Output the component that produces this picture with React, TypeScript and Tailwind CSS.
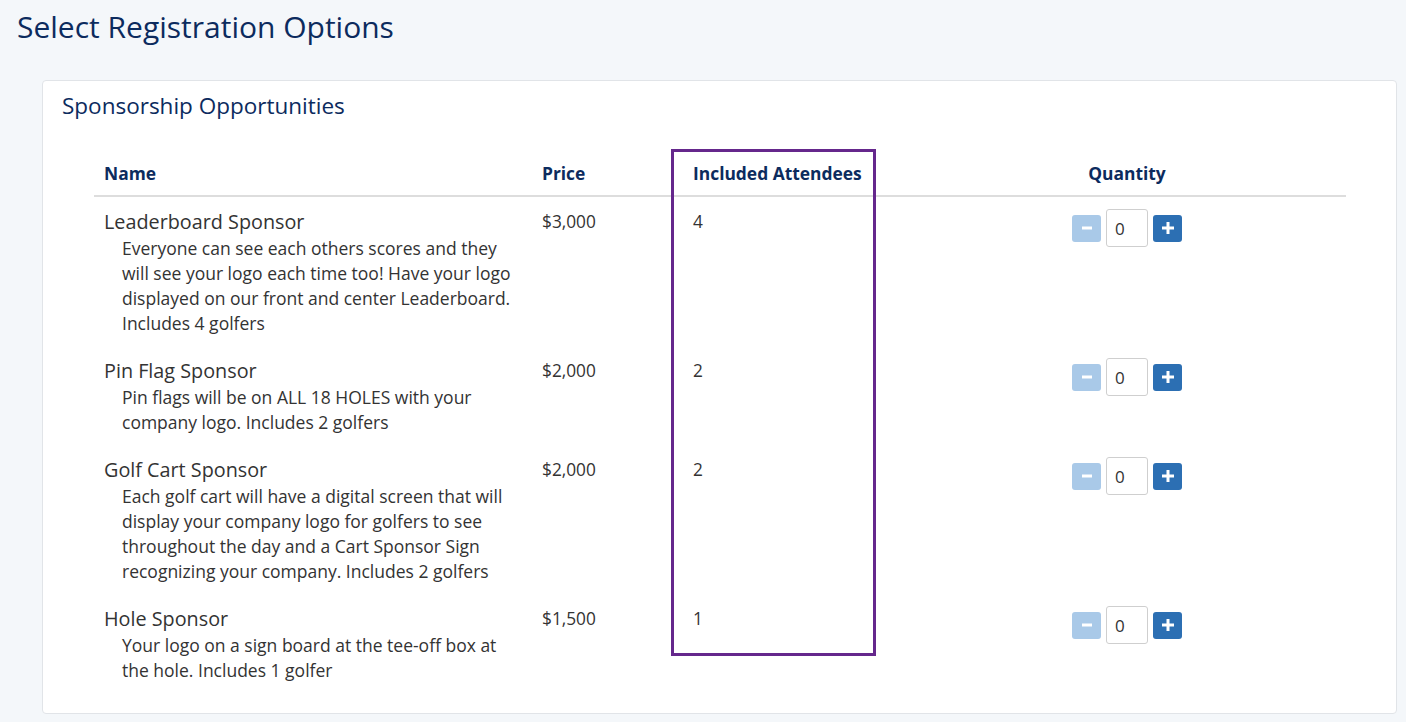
import React, { useState } from 'react';

interface Sponsorship {
  name: string;
  description: string;
  price: string;
  attendees: number;
}

const sponsorships: Sponsorship[] = [
  {
    name: 'Leaderboard Sponsor',
    description:
      'Everyone can see each others scores and they will see your logo each time too! Have your logo displayed on our front and center Leaderboard. Includes 4 golfers',
    price: '$3,000',
    attendees: 4,
  },
  {
    name: 'Pin Flag Sponsor',
    description: 'Pin flags will be on ALL 18 HOLES with your company logo. Includes 2 golfers',
    price: '$2,000',
    attendees: 2,
  },
  {
    name: 'Golf Cart Sponsor',
    description:
      'Each golf cart will have a digital screen that will display your company logo for golfers to see throughout the day and a Cart Sponsor Sign recognizing your company. Includes 2 golfers',
    price: '$2,000',
    attendees: 2,
  },
  {
    name: 'Hole Sponsor',
    description: 'Your logo on a sign board at the tee-off box at the hole. Includes 1 golfer',
    price: '$1,500',
    attendees: 1,
  },
];

const QuantityPicker: React.FC<{ value: number; onChange: (v: number) => void }> = ({ value, onChange }) => {
  const disabled = value <= 0;
  return (
    <div className="flex items-center justify-center gap-[5px]">
      <button
        onClick={() => !disabled && onChange(value - 1)}
        className={`w-[29px] h-[27px] rounded-[3px] flex items-center justify-center ${
          disabled ? 'bg-[#a9c9e8]' : 'bg-[#2c6fb3]'
        }`}
      >
        <svg width="12" height="12" viewBox="0 0 12 12">
          <rect x="1" y="4.5" width="10" height="3" fill="white" />
        </svg>
      </button>
      <input
        value={value}
        onChange={e => onChange(parseInt(e.target.value) || 0)}
        className="w-[42px] h-[38px] border border-[#cfcfcf] rounded-[3px] pl-[8px] text-[17px] text-[#333] bg-white outline-none"
      />
      <button
        onClick={() => onChange(value + 1)}
        className="w-[29px] h-[27px] rounded-[3px] bg-[#2c6fb3] flex items-center justify-center"
      >
        <svg width="14" height="14" viewBox="0 0 14 14">
          <rect x="5.5" y="1" width="3" height="12" fill="white" />
          <rect x="1" y="5.5" width="12" height="3" fill="white" />
        </svg>
      </button>
    </div>
  );
};

const App: React.FC = () => {
  const [qty, setQty] = useState<number[]>(sponsorships.map(() => 0));

  return (
    <div className="min-h-screen bg-[#f4f7fa] font-['Open_Sans',sans-serif] text-[#333] pb-[9px]">
      <h1 className="pl-[17px] pt-[7px] text-[30px] leading-[40px] text-[#0c2b5e]">Select Registration Options</h1>

      <div className="ml-[42px] mr-[9px] mt-[33px] bg-white border border-[#e1e4e8] rounded-[4px] pt-[10px] pb-[20px]">
        <h2 className="pl-[19px] text-[22.5px] leading-[30px] text-[#0c2b5e]">Sponsorship Opportunities</h2>

        <div className="ml-[51px] mr-[50px] mt-[30px] relative">
          <table className="w-full table-fixed border-collapse">
            <colgroup>
              <col className="w-[438px]" />
              <col className="w-[151px]" />
              <col className="w-[225px]" />
              <col />
            </colgroup>
            <thead>
              <tr className="border-b-2 border-[#dddddd]">
                <th className="text-left px-[10px] py-[10px] text-[17.4px] leading-[24px] font-bold text-[#0c2b5e]">Name</th>
                <th className="text-left px-[10px] py-[10px] text-[17.4px] leading-[24px] font-bold text-[#0c2b5e]">Price</th>
                <th className="text-left px-[10px] py-[10px] text-[17.4px] leading-[24px] font-bold text-[#0c2b5e]">Included Attendees</th>
                <th className="text-center px-[10px] py-[10px] text-[17.4px] leading-[24px] font-bold text-[#0c2b5e]">Quantity</th>
              </tr>
            </thead>
            <tbody>
              {sponsorships.map((s, i) => (
                <tr key={s.name}>
                  <td className="align-top px-[10px] pt-[11px] pb-[10px]">
                    <div className="text-[19.8px] leading-[28px]">{s.name}</div>
                    <div className="pl-[18px] pr-[5px] text-[17.5px] leading-[25px]">{s.description}</div>
                  </td>
                  <td className="align-top px-[10px] pt-[11px] text-[17.3px] leading-[28px]">{s.price}</td>
                  <td className="align-top px-[10px] pt-[11px] text-[17.3px] leading-[28px]">{s.attendees}</td>
                  <td className="align-top px-[10px] pt-[12px]">
                    <QuantityPicker
                      value={qty[i]}
                      onChange={v => setQty(prev => prev.map((q, j) => (j === i ? Math.max(0, v) : q)))}
                    />
                  </td>
                </tr>
              ))}
            </tbody>
          </table>

          {/* highlight around attendees column */}
          <div className="absolute left-[577px] top-[-2px] w-[205px] h-[507px] border-[3px] border-[#65278c] pointer-events-none" />
        </div>
      </div>
    </div>
  );
};

export default App;
